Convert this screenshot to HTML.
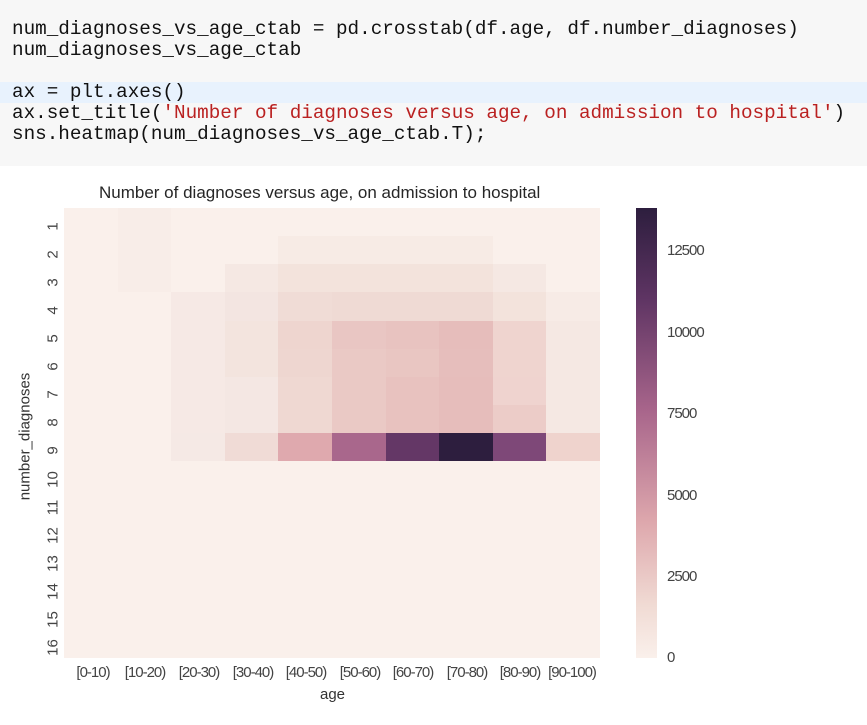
<!DOCTYPE html>
<html><head><meta charset="utf-8"><style>
body{margin:0;width:867px;height:725px;background:#fff;position:relative;overflow:hidden;font-family:"Liberation Sans",sans-serif}
.code{position:absolute;left:0;top:0;width:867px;height:166px;background:#f7f7f7}
.hl{position:absolute;left:0;top:82px;width:867px;height:21px;background:#e8f2fd}
.ln{position:absolute;left:12px;font-family:"Liberation Mono",monospace;font-size:19.3px;color:#111;white-space:pre;line-height:21px}
.s{color:#ba2121}
.t{position:absolute;color:#262626;white-space:nowrap}
.yl{position:absolute;left:38px;width:30px;text-align:center;font-size:15px;color:#444;transform:rotate(-90deg)}
.xl{position:absolute;top:664px;width:54px;text-align:center;font-size:15px;color:#444;letter-spacing:-1px}
.cl{position:absolute;left:667px;font-size:15px;color:#444;letter-spacing:-1px}
</style></head><body>
<div class="code"><div class="hl"></div>
<div class="ln" style="top:19px">num_diagnoses_vs_age_ctab = pd.crosstab(df.age, df.number_diagnoses)</div>
<div class="ln" style="top:40px">num_diagnoses_vs_age_ctab</div>
<div class="ln" style="top:82px">ax = plt.axes()</div>
<div class="ln" style="top:103px">ax.set_title(<span class="s">'Number of diagnoses versus age, on admission to hospital'</span>)</div>
<div class="ln" style="top:124px">sns.heatmap(num_diagnoses_vs_age_ctab.T);</div>
</div>
<div class="t" style="left:99px;top:183px;font-size:17px">Number of diagnoses versus age, on admission to hospital</div>
<svg style="position:absolute;left:0;top:0" width="867" height="725">
<defs><linearGradient id="g" x1="0" y1="0" x2="0" y2="1">
<stop offset="0" stop-color="#2d1e3e"/><stop offset="0.2" stop-color="#5e3463"/><stop offset="0.45" stop-color="#a8658b"/><stop offset="0.7" stop-color="#dea8ad"/><stop offset="0.88" stop-color="#f0dad3"/><stop offset="1" stop-color="#faf0eb"/></linearGradient></defs>
<rect x="64" y="208" width="536" height="450" fill="#faf0eb"/>
<g id="cells"></g>
<rect x="636" y="208" width="21" height="450" fill="url(#g)"/>
</svg>
<div class="yl" style="top:218px">1</div><div class="yl" style="top:246px">2</div><div class="yl" style="top:274px">3</div><div class="yl" style="top:302px">4</div><div class="yl" style="top:330px">5</div><div class="yl" style="top:358px">6</div><div class="yl" style="top:386px">7</div><div class="yl" style="top:414px">8</div><div class="yl" style="top:442px">9</div><div class="yl" style="top:471px">10</div><div class="yl" style="top:499px">11</div><div class="yl" style="top:527px">12</div><div class="yl" style="top:555px">13</div><div class="yl" style="top:583px">14</div><div class="yl" style="top:611px">15</div><div class="yl" style="top:639px">16</div>
<div class="t" style="left:-40px;top:428px;font-size:15px;color:#333;transform:rotate(-90deg);width:130px;text-align:center">number_diagnoses</div>
<div class="xl" style="left:66px">[0-10)</div><div class="xl" style="left:118px">[10-20)</div><div class="xl" style="left:172px">[20-30)</div><div class="xl" style="left:226px">[30-40)</div><div class="xl" style="left:279px">[40-50)</div><div class="xl" style="left:333px">[50-60)</div><div class="xl" style="left:386px">[60-70)</div><div class="xl" style="left:440px">[70-80)</div><div class="xl" style="left:493px">[80-90)</div><div class="xl" style="left:545px">[90-100)</div>
<div class="t" style="left:320px;top:686px;font-size:15px;color:#333">age</div>
<div class="cl" style="top:242px">12500</div><div class="cl" style="top:324px">10000</div><div class="cl" style="top:405px">7500</div><div class="cl" style="top:487px">5000</div><div class="cl" style="top:568px">2500</div><div class="cl" style="top:649px">0</div>
<script>
var B="#faf0eb";
var R=[
[B,"#f8ede8",B,B,B,B,B,B,B,B],
[B,"#f8ede8",B,B,"#f7ebe5","#f7ebe5","#f7ebe5","#f7ebe5",B,B],
[B,"#f8ede8",B,"#f5e8e3","#f3e3dc","#f3e3dc","#f3e3dc","#f3e3dc","#f5e8e3",B],
[B,B,"#f6e9e5","#f3e5e1","#f0dcd6","#efdad4","#efdad4","#efdad4","#f3e3dc","#f7ebe6"],
[B,B,"#f6e9e5","#f3e4de","#eed5cf","#e9c6c3","#e8c3c0","#e6bdbb","#efd4cf","#f5e8e3"],
[B,B,"#f6e9e5","#f3e4de","#eed6d0","#eac9c5","#e9c6c2","#e6bebc","#efd4cf","#f5e8e3"],
[B,B,"#f6e9e5","#f4e7e3","#efd8d2","#eac9c5","#e8c2bf","#e6bdbb","#efd3cf","#f5e8e3"],
[B,B,"#f6e9e5","#f4e7e3","#efd8d2","#eac9c5","#e8c2bf","#e6bdbb","#ecccc8","#f5e8e3"],
[B,B,"#f5e9e5","#f0dbd6","#dfa9ae","#a9678c","#643766","#2d1e3e","#7e4878","#efd3cd"]];
var g=document.getElementById("cells"),s="";
for(var r=0;r<9;r++)for(var c=0;c<10;c++){if(R[r][c]==B)continue;
var x0=Math.round(64+c*53.6),x1=Math.round(64+(c+1)*53.6),y0=Math.round(208+r*28.125),y1=Math.round(208+(r+1)*28.125);
s+='<rect x="'+x0+'" y="'+y0+'" width="'+(x1-x0)+'" height="'+(y1-y0)+'" fill="'+R[r][c]+'"/>';}
g.innerHTML=s;
</script>
</body></html>
